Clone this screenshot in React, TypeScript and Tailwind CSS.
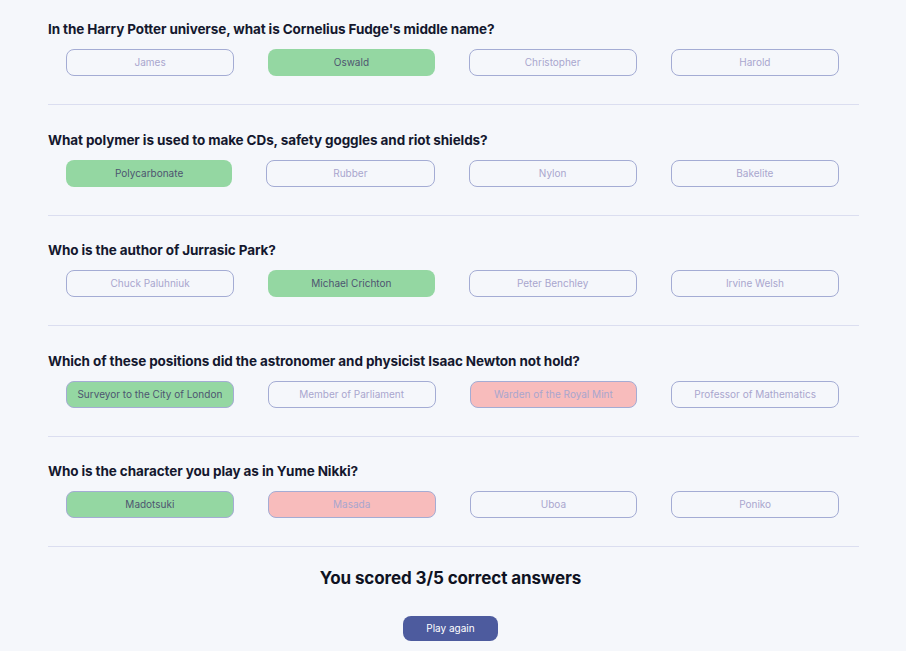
import React from "react";

type State = "none" | "selected" | "correct" | "wrong";
type Q = { q: string; answers: { text: string; state: State }[] };

const data: Q[] = [
  {
    q: "In the Harry Potter universe, what is Cornelius Fudge's middle name?",
    answers: [
      { text: "James", state: "none" },
      { text: "Oswald", state: "selected" },
      { text: "Christopher", state: "none" },
      { text: "Harold", state: "none" },
    ],
  },
  {
    q: "What polymer is used to make CDs, safety goggles and riot shields?",
    answers: [
      { text: "Polycarbonate", state: "selected" },
      { text: "Rubber", state: "none" },
      { text: "Nylon", state: "none" },
      { text: "Bakelite", state: "none" },
    ],
  },
  {
    q: "Who is the author of Jurrasic Park?",
    answers: [
      { text: "Chuck Paluhniuk", state: "none" },
      { text: "Michael Crichton", state: "selected" },
      { text: "Peter Benchley", state: "none" },
      { text: "Irvine Welsh", state: "none" },
    ],
  },
  {
    q: "Which of these positions did the astronomer and physicist Isaac Newton not hold?",
    answers: [
      { text: "Surveyor to the City of London", state: "correct" },
      { text: "Member of Parliament", state: "none" },
      { text: "Warden of the Royal Mint", state: "wrong" },
      { text: "Professor of Mathematics", state: "none" },
    ],
  },
  {
    q: "Who is the character you play as in Yume Nikki?",
    answers: [
      { text: "Madotsuki", state: "correct" },
      { text: "Masada", state: "wrong" },
      { text: "Uboa", state: "none" },
      { text: "Poniko", state: "none" },
    ],
  },
];

function Answer({ text, state }: { text: string; state: State }) {
  let cls =
    "flex-1 h-[27px] rounded-[8px] text-[10px] flex items-center justify-center ";
  if (state === "selected") cls += "bg-[#94D7A2] text-[#4D5570]";
  else if (state === "correct") cls += "bg-[#94D7A2] border border-[#A4ACD4] text-[#4D5570]";
  else if (state === "wrong") cls += "bg-[#F8BCBC] border border-[#A4ACD4] text-[#A9A6CE]";
  else cls += "border border-[#A4ACD4] text-[#A9A6CE]";
  return <div className={cls}>{text}</div>;
}

export default function App() {
  return (
    <div
      className="min-h-[651px] bg-[#F5F7FB] text-[#293264]"
      style={{ fontFamily: "Inter, 'Noto Sans', sans-serif" }}
    >
      <div className="w-[811px] ml-[48px] pt-[20px] pb-[10px]">
        {data.map((d, i) => (
          <div
            key={i}
            className={
              "border-b border-[#DBDEF0] pb-[28px] " + (i > 0 ? "pt-[25.5px]" : "")
            }
          >
            <div className="text-[13.5px] leading-[18px] font-bold text-[#14182e] tracking-[-0.1px]">
              {d.q}
            </div>
            <div className="flex gap-[34px] pl-[18px] pr-[20px] mt-[11px]">
              {d.answers.map((a, j) => (
                <Answer key={j} text={a.text} state={a.state} />
              ))}
            </div>
          </div>
        ))}
        <div className="flex flex-col items-center pr-[6px]">
          <div className="mt-[20px] text-[17px] leading-[22px] font-bold text-[#0f1222] tracking-[-0.1px]">
            You scored 3/5 correct answers
          </div>
          <button className="mt-[27px] w-[95px] h-[25px] rounded-[8px] bg-[#4D5B9E] text-white text-[10px]">
            Play again
          </button>
        </div>
      </div>
    </div>
  );
}
